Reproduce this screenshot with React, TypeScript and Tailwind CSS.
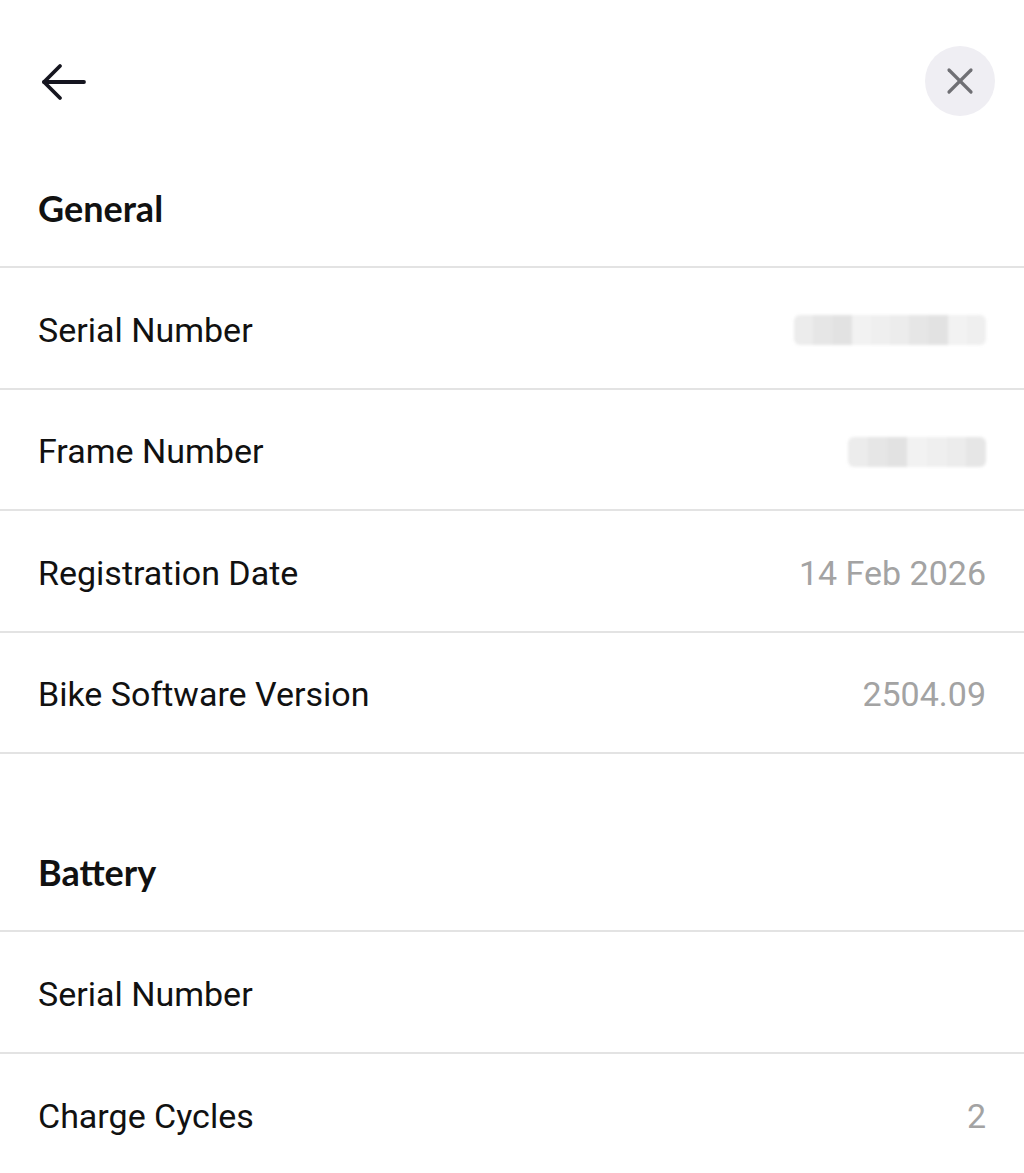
import React from 'react';

type Row = { label: string; value?: string; blur?: number };

const general: Row[] = [
  { label: 'Serial Number', blur: 192 },
  { label: 'Frame Number', blur: 138 },
  { label: 'Registration Date', value: '14 Feb 2026' },
  { label: 'Bike Software Version', value: '2504.09' },
];

const battery: Row[] = [
  { label: 'Serial Number' },
  { label: 'Charge Cycles', value: '2' },
];

function Blurred({ width }: { width: number }) {
  // pixelated placeholder for hidden values
  const cells = Array.from({ length: Math.round(width / 20) });
  const shades = ['bg-[#ececec]', 'bg-[#e2e2e2]', 'bg-[#efefef]', 'bg-[#e6e6e6]', 'bg-[#f2f2f2]'];
  return (
    <div className="flex h-[30px] blur-[1.5px] rounded-md overflow-hidden" style={{ width }}>
      {cells.map((_, i) => (
        <div key={i} className={`flex-1 ${shades[(i * 3) % shades.length]}`} />
      ))}
    </div>
  );
}

function InfoRow({ row }: { row: Row }) {
  return (
    <div className="flex items-center justify-between h-[121.5px] pt-[5px] px-[38px] border-b-2 border-[#e3e3e3]">
      <span className="text-[34px] text-[#111] font-['Roboto',sans-serif]">{row.label}</span>
      {row.value && (
        <span className="text-[34px] text-[#a3a3a3] font-['Roboto',sans-serif]">{row.value}</span>
      )}
      {row.blur && <Blurred width={row.blur} />}
    </div>
  );
}

function Section({ title, rows, className }: { title: string; rows: Row[]; className?: string }) {
  return (
    <section className={className}>
      <h2 className="px-[38px] pb-[36px] text-[36px] font-bold text-[#111] font-['Lato',sans-serif] border-b-2 border-[#e3e3e3] leading-[1.2]">
        {title}
      </h2>
      {rows.map((r, i) => (
        <InfoRow key={i} row={r} />
      ))}
    </section>
  );
}

export default function App() {
  return (
    <div className="w-[1024px] h-[1173px] bg-white overflow-hidden">
      <div className="flex items-start justify-between px-[28px] pt-[46px] h-[150px]">
        <button className="w-[72px] h-[72px] flex items-center justify-center">
          <svg width="48" height="40" viewBox="0 0 48 40" fill="none" stroke="#15151f" strokeWidth="3.8" strokeLinecap="round" strokeLinejoin="round">
            <path d="M44 20H4" />
            <path d="M20 4L4 20L20 36" />
          </svg>
        </button>
        <button className="w-[70px] h-[70px] mr-[1px] rounded-full bg-[#efeef3] flex items-center justify-center">
          <svg width="28" height="28" viewBox="0 0 28 28" fill="none" stroke="#6f6f74" strokeWidth="3.2" strokeLinecap="round">
            <path d="M3 3L25 25" />
            <path d="M25 3L3 25" />
          </svg>
        </button>
      </div>
      <Section title="General" rows={general} className="pt-[37px]" />
      <Section title="Battery" rows={battery} className="pt-[97px]" />
    </div>
  );
}
